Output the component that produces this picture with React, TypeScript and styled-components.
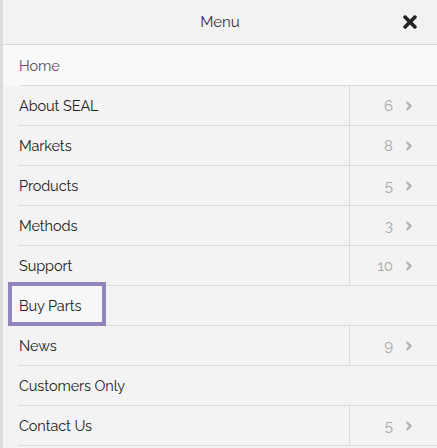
import React from 'react';
import styled, { createGlobalStyle } from 'styled-components';
import { FaTimes, FaAngleRight } from 'react-icons/fa';

const GlobalStyle = createGlobalStyle`
  html, body {
    margin: 0;
    padding: 0;
    background: #f2f2f2;
  }
  body {
    font-family: 'Raleway', Lato, 'Open Sans', sans-serif;
  }
`;

const Panel = styled.nav`
  width: 437px;
  height: 448px;
  overflow: hidden;
  background: #f3f3f3;
  border-left: 3px solid #dcdcdc;
  box-sizing: border-box;
`;

const Header = styled.header`
  height: 44px;
  display: flex;
  align-items: center;
  justify-content: center;
  position: relative;
  background: #f2f2f2;
  border-bottom: 1px solid #d8d8d8;
  font-size: 15px;
  color: #333;
`;

const Close = styled.button`
  position: absolute;
  right: 17px;
  top: 12px;
  border: 0;
  padding: 0;
  background: none;
  color: #222;
  display: flex;
`;

const List = styled.ul`
  list-style: none;
  margin: 0;
  padding: 0;
`;

const Row = styled.li<{ $active?: boolean }>`
  height: 40px;
  display: flex;
  margin-left: 15px;
  border-bottom: 1px solid #dadada;
  background: ${({ $active }) => ($active ? '#f9f9f9' : '#f3f3f3')};
  box-sizing: border-box;
  position: relative;
  &:first-child {
    height: 41px;
    margin-left: 0;
    padding-left: 15px;
    border-bottom: 0;
  }
  &:first-child::after {
    content: '';
    position: absolute;
    left: 18px;
    right: 0;
    bottom: 0;
    border-bottom: 1px solid #dadada;
  }
`;

const Label = styled.a<{ $active?: boolean }>`
  flex: 1;
  display: flex;
  align-items: center;
  position: relative;
  font-size: 14.5px;
  color: ${({ $active }) => ($active ? '#5b4a6b' : '#222')};
  text-decoration: none;
  letter-spacing: -0.1px;
  padding-left: 1px;
`;

const FocusRing = styled.span`
  position: absolute;
  left: -10px;
  top: -4px;
  width: 98px;
  height: 44px;
  border: 4px solid #9285bb;
  box-sizing: border-box;
  background: rgba(255, 255, 255, 0.35);
`;

const LabelText = styled.span`
  position: relative;
`;

const Count = styled.div`
  width: 88px;
  border-left: 1px solid #dadada;
  display: flex;
  align-items: center;
  justify-content: flex-end;
  gap: 9px;
  padding-right: 21px;
  box-sizing: border-box;
  font-size: 15px;
  color: #a8a8a8;
`;

const Chevron = styled(FaAngleRight)`
  color: #b0b0b0;
  margin-top: 1px;
`;

const items: { label: string; count?: number; active?: boolean; focused?: boolean }[] = [
  { label: 'Home', active: true },
  { label: 'About SEAL', count: 6 },
  { label: 'Markets', count: 8 },
  { label: 'Products', count: 5 },
  { label: 'Methods', count: 3 },
  { label: 'Support', count: 10 },
  { label: 'Buy Parts', focused: true },
  { label: 'News', count: 9 },
  { label: 'Customers Only' },
  { label: 'Contact Us', count: 5 },
];

export default function App() {
  return (
    <>
      <GlobalStyle />
      <Panel>
        <Header>
          Menu
          <Close aria-label="Close">
            <FaTimes size={20} />
          </Close>
        </Header>
        <List>
          {items.map((item) => (
            <Row key={item.label} $active={item.active}>
              <Label $active={item.active}>
                {item.focused && <FocusRing />}
                <LabelText>{item.label}</LabelText>
              </Label>
              {item.count !== undefined && (
                <Count>
                  {item.count}
                  <Chevron size={14} />
                </Count>
              )}
            </Row>
          ))}
        </List>
      </Panel>
    </>
  );
}
